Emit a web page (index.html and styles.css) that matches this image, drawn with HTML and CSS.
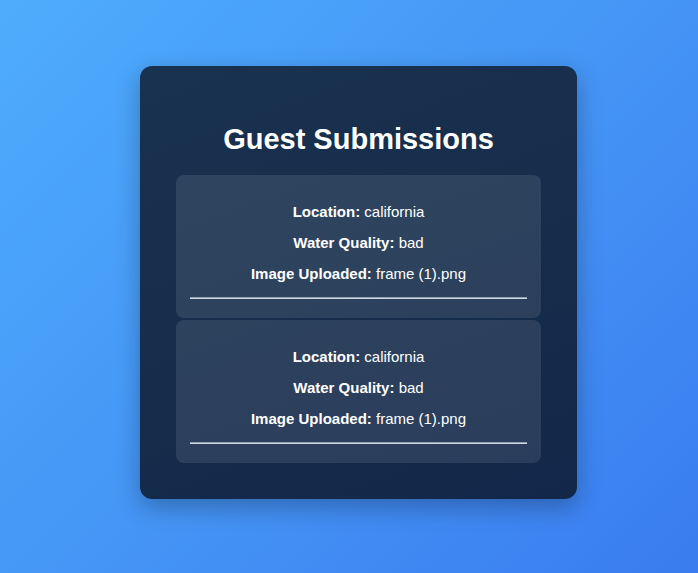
FILE: index.html
```html
<!DOCTYPE html>
<html lang="en">
<head>
<meta charset="utf-8">
<title>Guest Submissions</title>
<link rel="stylesheet" href="styles.css">
</head>
<body>
  <main class="panel">
    <h2 class="title">Guest Submissions</h2>
    <div class="list">
      <div class="entry">
        <p><strong>Location:</strong> california</p>
        <p><strong>Water Quality:</strong> bad</p>
        <p><strong>Image Uploaded:</strong> frame (1).png</p>
        <hr class="rule">
      </div>
      <div class="entry">
        <p><strong>Location:</strong> california</p>
        <p><strong>Water Quality:</strong> bad</p>
        <p><strong>Image Uploaded:</strong> frame (1).png</p>
        <hr class="rule">
      </div>
    </div>
  </main>
</body>
</html>
```

FILE: styles.css
```css
html, body {
  margin: 0;
  height: 100%;
}
body {
  box-sizing: border-box;
  min-height: 100vh;
  display: flex;
  align-items: center;
  justify-content: center;
  padding: 0 0 8px 19px;
  background: linear-gradient(135deg, #4eacfc 0%, #4596f6 50%, #3a7cef 100%);
  font-family: "Liberation Sans", Arial, Helvetica, sans-serif;
  color: #ffffff;
}
.panel {
  width: 365px;
  padding: 36px;
  border-radius: 12px;
  background: linear-gradient(160deg, #19324f 0%, #162d4b 50%, #13274a 100%);
  box-shadow: 0 8px 24px rgba(0, 0, 0, 0.28);
}
.title {
  margin: 21px 0 20px;
  font-size: 29px;
  line-height: 32px;
  font-weight: bold;
  text-align: center;
}
.list {
  display: flex;
  flex-direction: column;
  gap: 2px;
}
.entry {
  padding: 15px 14px 13px;
  border-radius: 8px;
  background: rgba(255, 255, 255, 0.1);
  text-align: center;
}
.entry p {
  margin: 13px 0;
  font-size: 15px;
  line-height: 18px;
}
.rule {
  margin: 14px 0 6px;
  height: 0;
  border: 0;
  border-top: 1px solid #93a3b6;
  border-bottom: 1px solid #cdd6e1;
}
```
